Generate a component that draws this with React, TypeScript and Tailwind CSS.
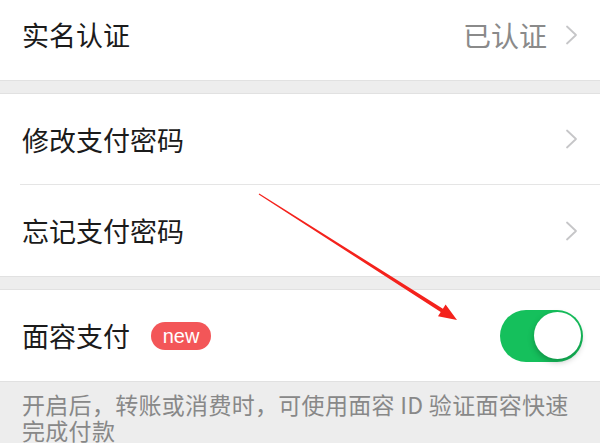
const font = { fontFamily: '"Noto Sans CJK SC", "Noto Sans", sans-serif' };

function Chevron() {
  return (
    <svg width="13" height="20" viewBox="0 0 13 20" className="shrink-0">
      <path d="M2 1.5 L11 10 L2 18.5" fill="none" stroke="#c6c6c8" strokeWidth="1.8" strokeLinecap="round" strokeLinejoin="round" />
    </svg>
  );
}

function Gap() {
  return <div className="h-[14px] shrink-0 border-y border-[#e1e1e1] bg-[#ededed]" />;
}

export default function App() {
  return (
    <div className="relative flex h-[443px] w-full flex-col overflow-hidden bg-[#ededed]" style={font}>
      {/* 实名认证 */}
      <div className="mt-[-11px] flex h-[91px] shrink-0 items-center justify-between bg-white pl-[22px] pr-[22px]">
        <span className="text-[27px] leading-none text-[#1b1b1b]">实名认证</span>
        <div className="flex items-center gap-[18px]">
          <span className="text-[28px] leading-none text-[#8a8a8a]">已认证</span>
          <Chevron />
        </div>
      </div>

      <Gap />

      <div className="shrink-0 bg-white pl-[20px]">
        <div className="flex h-[91px] items-center justify-between border-b border-[#e5e5e5] pl-[2px] pr-[22px]">
          <span className="text-[27px] leading-none text-[#1b1b1b]">修改支付密码</span>
          <Chevron />
        </div>
        <div className="flex h-[91px] items-center justify-between pl-[2px] pr-[22px]">
          <span className="text-[27px] leading-none text-[#1b1b1b]">忘记支付密码</span>
          <Chevron />
        </div>
      </div>

      <Gap />

      {/* 面容支付 */}
      <div className="flex h-[91px] shrink-0 items-center justify-between bg-white pl-[22px] pr-[17px]">
        <div className="flex items-center gap-[21px]">
          <span className="text-[27px] leading-none text-[#1b1b1b]">面容支付</span>
          <span
            className="flex h-[28px] w-[60px] items-center justify-center rounded-full bg-[#f35658] text-[20px] leading-none text-white"
            style={{ fontFamily: '"Liberation Sans", Arial, sans-serif' }}
          >
            new
          </span>
        </div>
        <div className="flex h-[52px] w-[83px] items-center justify-end rounded-full bg-[#15c05c] pr-[2px]">
          <div className="h-[47px] w-[47px] rounded-full bg-white shadow-[0_3px_6px_rgba(0,0,0,0.25)]" />
        </div>
      </div>

      <div className="flex-1 border-t border-[#e1e1e1] pl-[22px] pr-[8px] pt-[9px] text-[23px] leading-[26px] tracking-[0.3px] text-[#888888]">
        开启后，转账或消费时，可使用面容 ID 验证面容快速
        <br />
        完成付款
      </div>

      <svg className="pointer-events-none absolute inset-0" width="600" height="443" viewBox="0 0 600 443">
        <polygon
          points="258.7,194.4 440.7,312.1 438.0,316.3 457,320 445.6,304.5 442.9,308.7 259.3,193.6"
          fill="#f4221c"
        />
      </svg>
    </div>
  );
}
